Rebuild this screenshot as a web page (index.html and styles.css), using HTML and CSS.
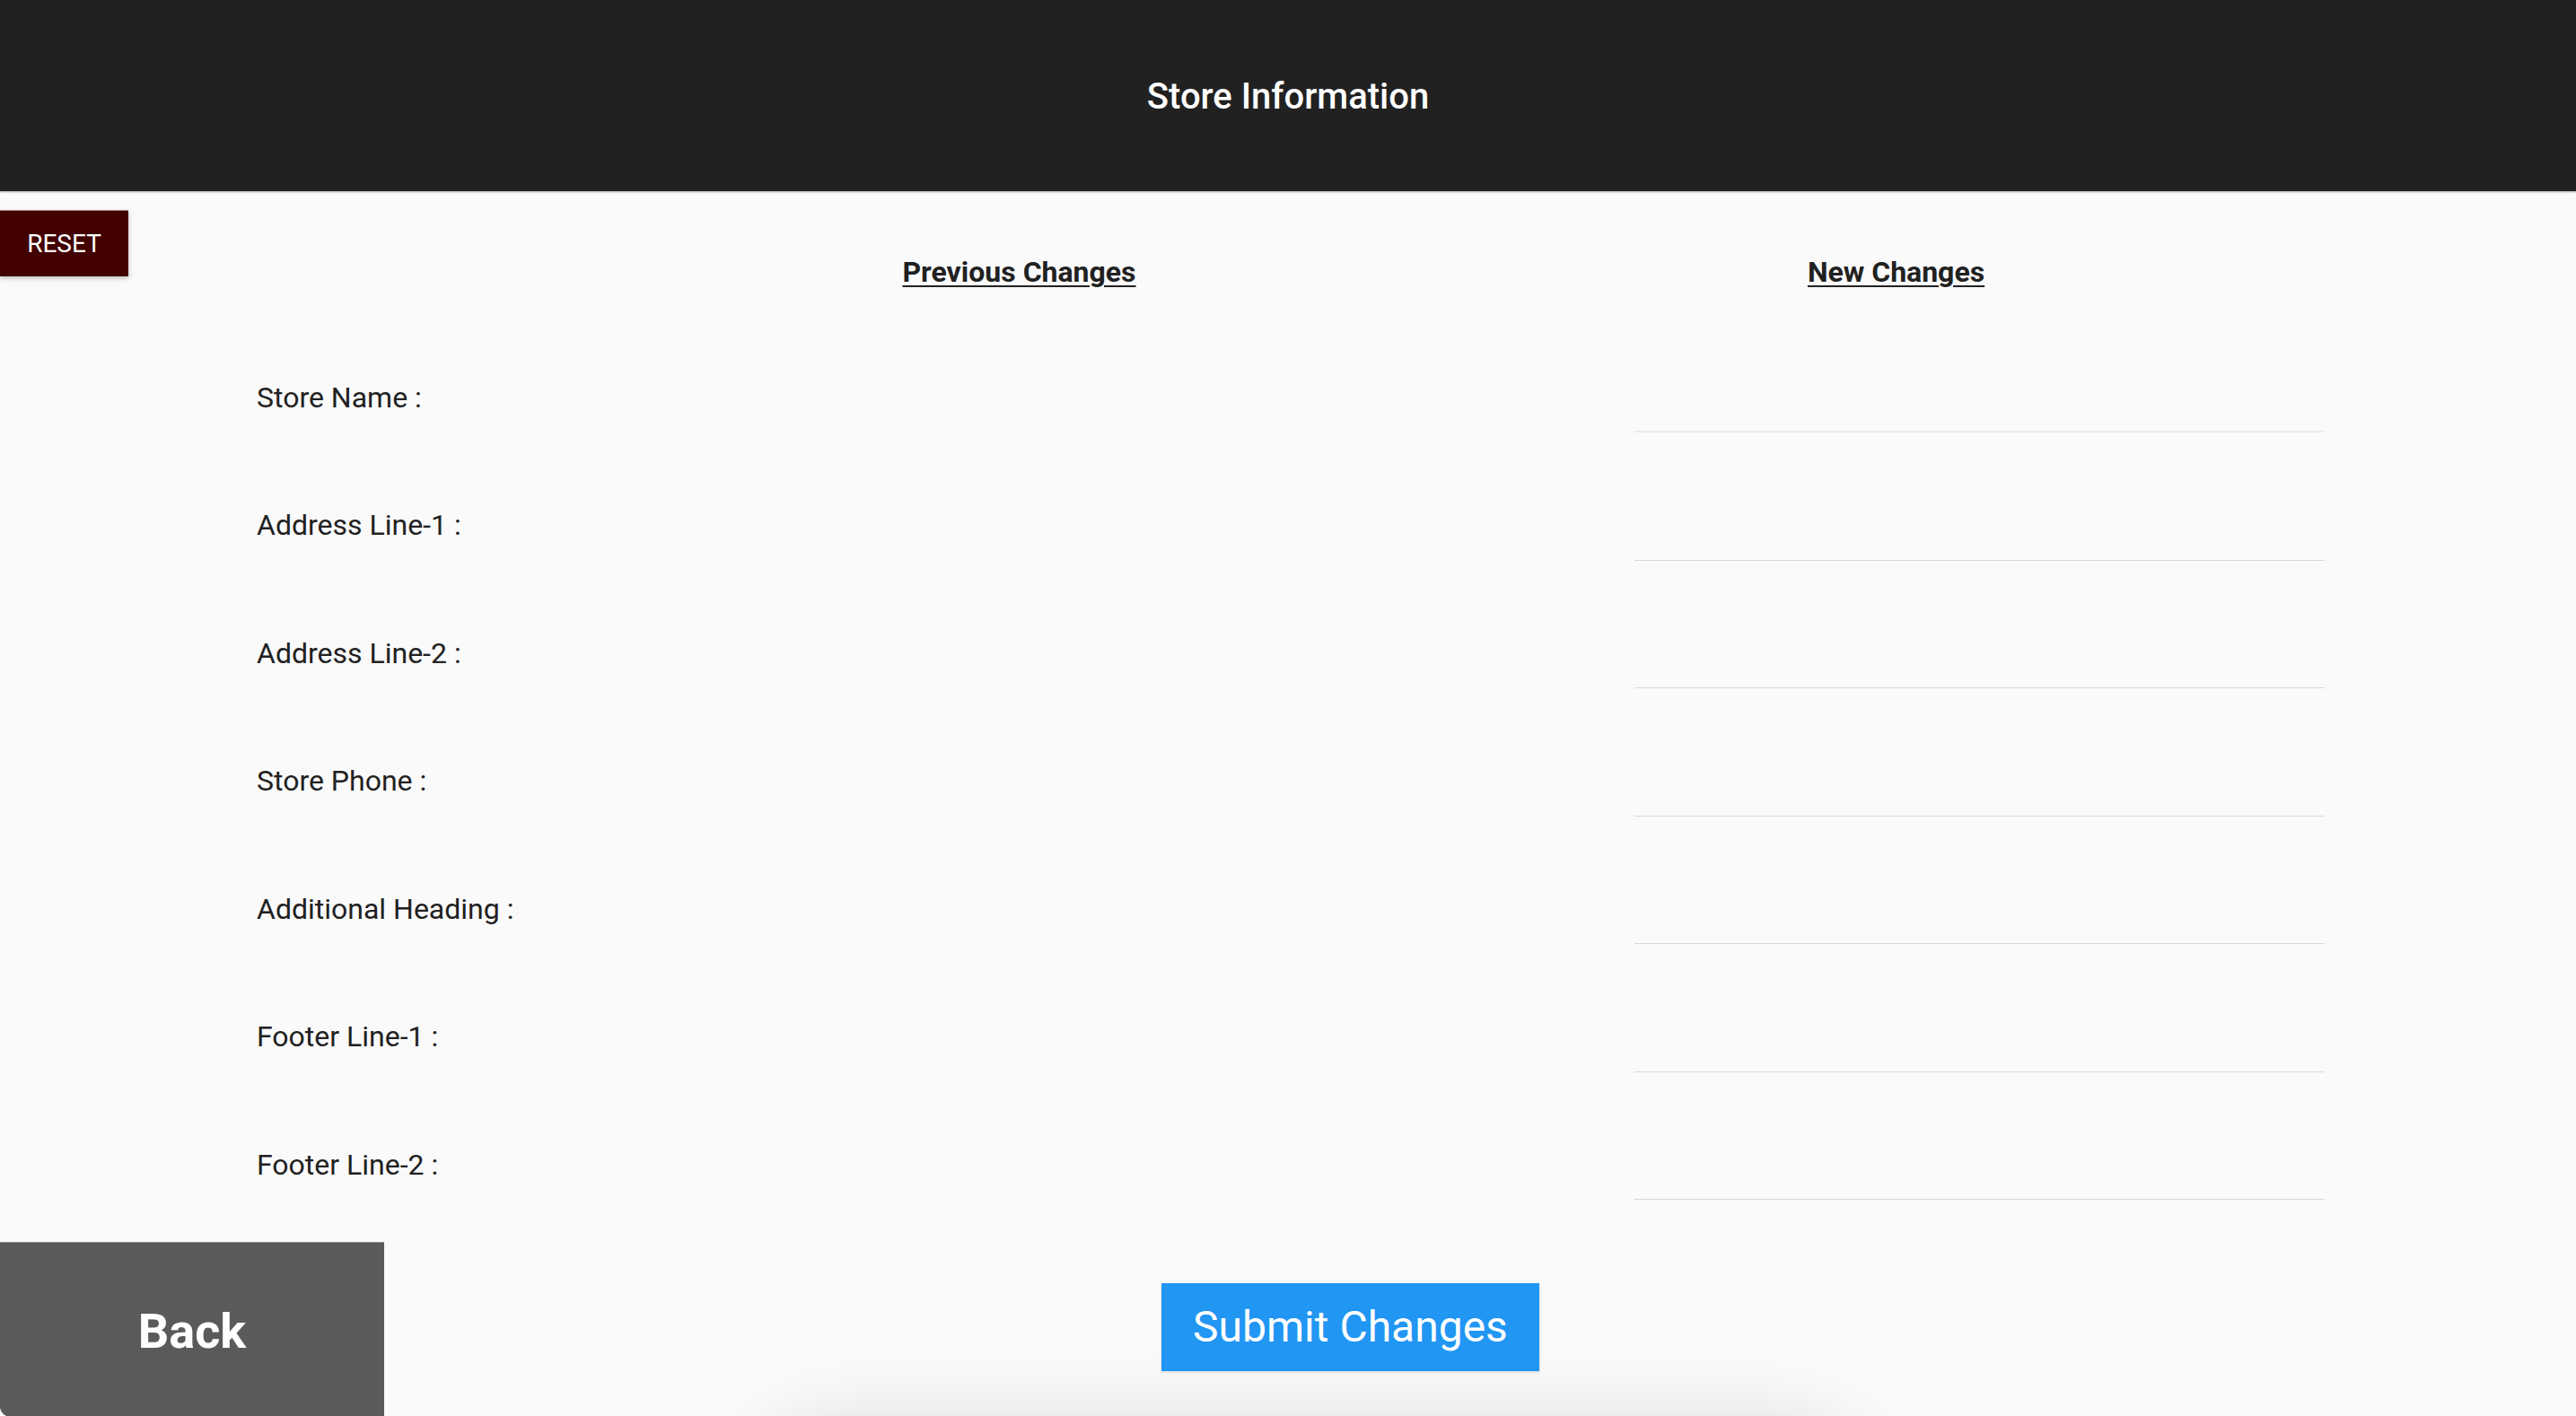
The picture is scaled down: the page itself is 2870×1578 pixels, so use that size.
FILE: index.html
```html
<!DOCTYPE html>
<html lang="en">
<head>
<meta charset="utf-8">
<title>Store Information</title>
<link rel="stylesheet" href="styles.css">
</head>
<body>
<div class="app">
  <header class="topbar">
    <h1 class="title">Store Information</h1>
  </header>
  <main class="content">
    <div class="head-row">
      <div class="head-tools"><button class="reset-btn" type="button">RESET</button></div>
      <div class="col-head">Previous Changes</div>
      <div class="col-head">New Changes</div>
    </div>
    <div class="rows">
      <div class="row"><span class="label">Store Name :</span><input class="field field-first" type="text"></div>
      <div class="row"><span class="label">Address Line-1 :</span><input class="field" type="text"></div>
      <div class="row"><span class="label">Address Line-2 :</span><input class="field" type="text"></div>
      <div class="row"><span class="label">Store Phone :</span><input class="field" type="text"></div>
      <div class="row"><span class="label">Additional Heading :</span><input class="field" type="text"></div>
      <div class="row"><span class="label">Footer Line-1 :</span><input class="field" type="text"></div>
      <div class="row"><span class="label">Footer Line-2 :</span><input class="field" type="text"></div>
    </div>
    <div class="footer">
      <button class="back-btn" type="button">Back</button>
      <button class="submit-btn" type="button">Submit Changes</button>
    </div>
  </main>
  <div class="sheet-shadow"></div>
</div>
</body>
</html>
```
FILE: styles.css
```css
* { box-sizing: border-box; }
html, body {
  margin: 0;
  padding: 0;
  width: 2870px;
  height: 1578px;
  overflow: hidden;
  background: #fafafa;
  font-family: Roboto, "Liberation Sans", Arial, sans-serif;
  color: #212121;
}
.app {
  position: relative;
  width: 2870px;
  height: 1578px;
  overflow: hidden;
}
.topbar {
  height: 213px;
  background: #212121;
  display: flex;
  align-items: center;
  justify-content: center;
  box-shadow: 0 1px 2px rgba(0,0,0,0.35);
  position: relative;
  z-index: 2;
}
.title {
  margin: 0;
  padding-top: 3px;
  color: #ffffff;
  font-size: 40px;
  font-weight: 500;
  line-height: 1;
}
.content {
  padding-top: 22px;
}
.head-row {
  display: grid;
  grid-template-columns: 647px 977px 977px;
  height: 136px;
}
.head-tools {
  display: flex;
  align-items: flex-start;
}
.reset-btn {
  width: 143px;
  height: 73px;
  border: none;
  margin: 0;
  padding: 0;
  background: #420000;
  color: #ffffff;
  font-family: Roboto, "Liberation Sans", Arial, sans-serif;
  font-size: 28px;
  font-weight: 400;
  box-shadow: 0 2px 6px rgba(0,0,0,0.25), 0 -1px 0 rgba(120,60,60,0.6);
}
.col-head {
  text-align: center;
  font-size: 32px;
  font-weight: 700;
  text-decoration: underline;
  text-underline-offset: 4px;
  text-decoration-thickness: 2px;
  padding-top: 50px;
  line-height: 36px;
}
.rows {
  display: flex;
  flex-direction: column;
  padding-left: 286px;
}
.row {
  display: grid;
  grid-template-columns: 1535px 769px;
  height: 142.5px;
}
.label {
  align-self: center;
  font-size: 32px;
  line-height: 38px;
  padding-top: 1px;
}
.field {
  align-self: start;
  height: 111px;
  border: none;
  border-bottom: 1px solid #d8d8d8;
  background: transparent;
  outline: none;
  padding: 0;
  margin: 0;
  font-family: Roboto, "Liberation Sans", Arial, sans-serif;
  font-size: 32px;
}
.field-first {
  border-bottom: 2px solid #ebebeb;
}
.footer {
  margin-top: 16px;
  display: flex;
  align-items: flex-start;
  height: 194px;
}
.back-btn {
  width: 428px;
  height: 194px;
  border: none;
  margin: 0;
  padding-top: 4px;
  background: #5a5a5a;
  color: #ffffff;
  font-family: Roboto, "Liberation Sans", Arial, sans-serif;
  font-size: 54px;
  font-weight: 700;
  box-shadow: 0 -1px 0 #8a8a8a;
  border-bottom-left-radius: 12px;
}
.submit-btn {
  margin-left: 866px;
  margin-top: 45px;
  width: 421px;
  height: 98px;
  border: none;
  background: #2196f3;
  color: #ffffff;
  font-family: Roboto, "Liberation Sans", Arial, sans-serif;
  font-size: 48px;
  font-weight: 400;
  box-shadow: 0 1px 3px rgba(0,0,0,0.15);
  position: relative;
  z-index: 2;
}
.sheet-shadow {
  position: absolute;
  left: 880px;
  top: 1630px;
  width: 1160px;
  height: 200px;
  border-radius: 60px;
  background: #dcdcdc;
  box-shadow: 0 0 90px 40px rgba(0,0,0,0.14);
}
```
